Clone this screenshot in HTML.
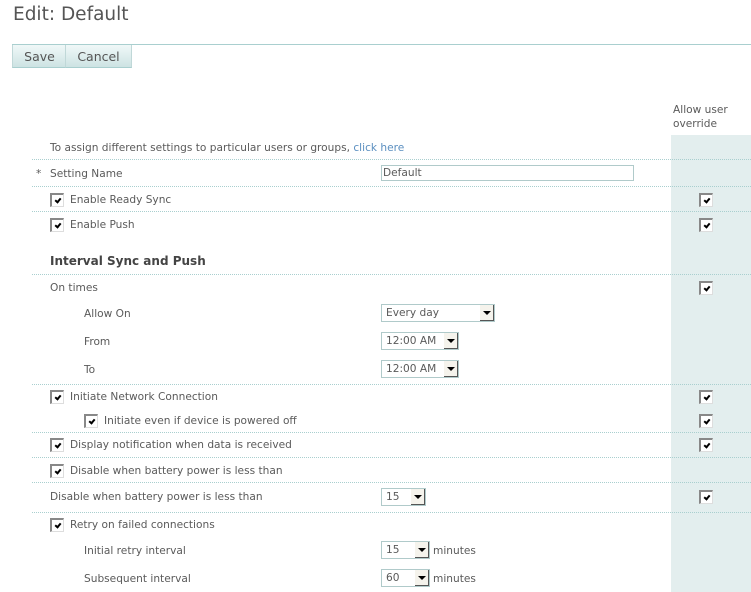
<!DOCTYPE html>
<html><head><meta charset="utf-8"><style>
body{margin:0;width:751px;height:592px;overflow:hidden;background:#fff;font-family:"DejaVu Sans","Liberation Sans",sans-serif;font-size:10.6px;color:#5a5a5a;position:relative}
.a{position:absolute;white-space:nowrap;line-height:14px}
.ln{position:absolute;left:32px;width:719px;border-top:1px dotted #a9cfcf;height:0}
.cb{position:absolute;width:11px;height:11px;background:#fff;border-left:2px solid #888;border-top:2px solid #888;border-right:1px solid #ddd;border-bottom:1px solid #ddd;box-sizing:content-box}
.cb:after{content:"";position:absolute;left:4px;top:2px;width:2px;height:4px;border-right:2px solid #000;border-bottom:2px solid #000;transform:rotate(40deg)}
.sel{position:absolute;height:16px;border:1px solid #b0caca;background:#fff;line-height:16px;padding-left:4px;box-sizing:content-box}
.ar{position:absolute;right:0;top:0;width:13px;height:15px;background:#f5f3ec;border-right:1px solid #555;border-bottom:1px solid #555}
.ar:after{content:"";position:absolute;left:3px;top:6px;border-left:4px solid transparent;border-right:4px solid transparent;border-top:4px solid #000}
.btn{position:absolute;top:45px;height:22px;line-height:23px;font-size:12.5px;color:#555;background:linear-gradient(#f0f8f8,#cde3e3);text-align:center;border-bottom:1px solid #a9cfcf}
</style></head><body>
<div class="a" style="left:13px;top:3px;font-size:18.5px;line-height:24px;color:#555">Edit: Default</div>
<div style="position:absolute;left:12px;top:44px;width:739px;border-top:1px solid #a9cfcf"></div>
<div class="btn" style="left:12px;width:53px;border-left:1px solid #c0d8d8">Save</div>
<div class="btn" style="left:65px;width:65px;border-left:1px solid #c0d8d8;border-right:1px solid #c0d8d8">Cancel</div>

<div style="position:absolute;left:671px;top:135px;width:80px;height:457px;background:#e3eeee"></div>
<div class="a" style="left:673px;top:103px">Allow user<br>override</div>

<div class="a" style="left:50px;top:141px">To assign different settings to particular users or groups, <span style="color:#5b8fc0">click here</span></div>
<div class="ln" style="top:159px"></div>
<div class="a" style="left:36px;top:167px">*</div>
<div class="a" style="left:50px;top:167px">Setting Name</div>
<div style="position:absolute;left:381px;top:165px;width:250px;height:14px;border:1px solid #b0caca;line-height:15px;padding-left:1px">Default</div>
<div class="ln" style="top:186px"></div>
<div class="cb" style="left:50px;top:193px"></div><div class="a" style="left:70px;top:193px">Enable Ready Sync</div>
<div class="cb" style="left:699px;top:193px"></div>
<div class="ln" style="top:211px"></div>
<div class="cb" style="left:50px;top:218px"></div><div class="a" style="left:70px;top:218px">Enable Push</div>
<div class="cb" style="left:699px;top:218px"></div>
<div class="a" style="left:50px;top:254px;font-weight:bold;font-size:12px;color:#444">Interval Sync and Push</div>
<div class="ln" style="top:274px"></div>
<div class="a" style="left:50px;top:281px">On times</div>
<div class="cb" style="left:699px;top:281px"></div>
<div class="a" style="left:84px;top:307px">Allow On</div>
<div class="sel" style="left:381px;top:304px;width:108px">Every day<div class="ar"></div></div>
<div class="a" style="left:84px;top:335px">From</div>
<div class="sel" style="left:381px;top:332px;width:72px">12:00 AM<div class="ar"></div></div>
<div class="a" style="left:84px;top:363px">To</div>
<div class="sel" style="left:381px;top:360px;width:72px">12:00 AM<div class="ar"></div></div>
<div class="ln" style="top:384px"></div>
<div class="cb" style="left:50px;top:390px"></div><div class="a" style="left:70px;top:390px">Initiate Network Connection</div>
<div class="cb" style="left:699px;top:390px"></div>
<div class="cb" style="left:84px;top:414px"></div><div class="a" style="left:104px;top:414px">Initiate even if device is powered off</div>
<div class="cb" style="left:699px;top:414px"></div>
<div class="ln" style="top:432px"></div>
<div class="cb" style="left:50px;top:438px"></div><div class="a" style="left:70px;top:438px">Display notification when data is received</div>
<div class="cb" style="left:699px;top:438px"></div>
<div class="ln" style="top:457px"></div>
<div class="cb" style="left:50px;top:464px"></div><div class="a" style="left:70px;top:464px">Disable when battery power is less than</div>
<div class="ln" style="top:482px"></div>
<div class="a" style="left:50px;top:490px">Disable when battery power is less than</div>
<div class="sel" style="left:381px;top:488px;width:39px">15<div class="ar"></div></div>
<div class="cb" style="left:699px;top:490px"></div>
<div class="ln" style="top:512px"></div>
<div class="cb" style="left:50px;top:518px"></div><div class="a" style="left:70px;top:518px">Retry on failed connections</div>
<div class="a" style="left:84px;top:544px">Initial retry interval</div>
<div class="sel" style="left:381px;top:541px;width:43px">15<div class="ar"></div></div>
<div class="a" style="left:433px;top:544px">minutes</div>
<div class="a" style="left:84px;top:572px">Subsequent interval</div>
<div class="sel" style="left:381px;top:569px;width:43px">60<div class="ar"></div></div>
<div class="a" style="left:433px;top:572px">minutes</div>
</body></html>
